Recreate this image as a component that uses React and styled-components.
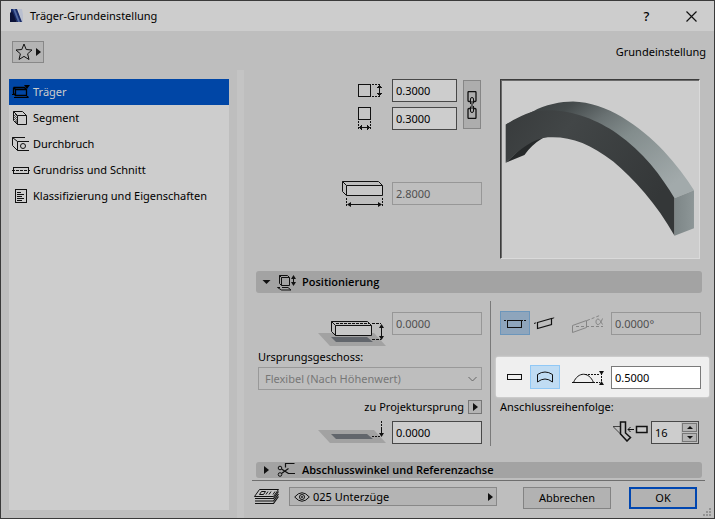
import React from 'react'
import styled, { createGlobalStyle, css } from 'styled-components'

const pages = [
  { id: 'beam', label: 'Träger', icon: BeamIcon },
  { id: 'segment', label: 'Segment', icon: SegmentIcon },
  { id: 'hole', label: 'Durchbruch', icon: HoleIcon },
  { id: 'plan', label: 'Grundriss und Schnitt', icon: PlanIcon },
  { id: 'class', label: 'Klassifizierung und Eigenschaften', icon: ListIcon },
]

export default function App() {
  const [page, setPage] = React.useState('beam')
  const [slanted, setSlanted] = React.useState(false)
  const [curved, setCurved] = React.useState(true)
  const [order, setOrder] = React.useState(16)

  return (
    <Dialog>
      <GlobalStyle />
      <TitleBar>
        <Logo />
        <Title>Träger-Grundeinstellung</Title>
        <TitleButton aria-label="Hilfe">?</TitleButton>
        <TitleButton aria-label="Schließen">
          <Icon w={11} h={11}>
            <path d="M.5.5l10 10M10.5.5l-10 10" strokeWidth="1.2" />
          </Icon>
        </TitleButton>
      </TitleBar>

      <Toolbar>
        <FavoriteButton aria-label="Favoriten">
          <Icon w={18} h={18}>
            <path d="M9 1L11.2 6.5 17 7 12.6 10.8 14 16.5 9 13.4 4 16.5 5.4 10.8 1 7 6.8 6.5z" />
          </Icon>
          <ArrowRight />
        </FavoriteButton>
        <span>Grundeinstellung</span>
      </Toolbar>

      <Columns>
        <Sidebar>
          {pages.map(({ id, label, icon: PageIcon }) => (
            <PageButton key={id} $active={id === page} onClick={() => setPage(id)}>
              <PageIcon />
              {label}
            </PageButton>
          ))}
        </Sidebar>
        <Splitter />

        <Main>
          <Scroller>
            <SizePanel>
              <SizeForm>
                <Pair>
                  <Stack>
                    <Field>
                      <HeightIcon />
                      <TextBox $w={65} aria-label="Höhe" defaultValue="0.3000" />
                    </Field>
                    <Field>
                      <WidthIcon />
                      <TextBox $w={65} aria-label="Breite" defaultValue="0.3000" />
                    </Field>
                  </Stack>
                  <LinkButton aria-label="Maße verknüpfen">
                    <ChainIcon />
                  </LinkButton>
                </Pair>
                <Field>
                  <LengthIcon />
                  <TextBox aria-label="Länge" defaultValue="2.8000" disabled />
                </Field>
              </SizeForm>
              <Preview>
                <BeamPreview />
              </Preview>
            </SizePanel>

            <SectionHeader>
              <ArrowDown />
              <PositionIcon />
              Positionierung
            </SectionHeader>

            <PositionPanel>
              <LeftColumn>
                <ElevationRow>
                  <ElevationIcon />
                  <TextBox aria-label="Höhenlage" defaultValue="0.0000" disabled />
                </ElevationRow>
                <Label htmlFor="story">Ursprungsgeschoss:</Label>
                <SelectWrapper>
                  <Select id="story" disabled>
                    <option>Flexibel (Nach Höhenwert)</option>
                  </Select>
                  <Icon w={11} h={7}>
                    <path d="M1.5 1l4 4 4-4" />
                  </Icon>
                </SelectWrapper>
                <OriginLabel>
                  <label htmlFor="origin">zu Projektursprung</label>
                  <SmallButton aria-label="Bezug wählen">
                    <ArrowRight />
                  </SmallButton>
                </OriginLabel>
                <PlaneField>
                  <OriginIcon />
                  <TextBox id="origin" defaultValue="0.0000" />
                </PlaneField>
              </LeftColumn>

              <RightColumn>
                <OptionRow>
                  <Toggle aria-label="Horizontal" $active={!slanted} onClick={() => setSlanted(false)}>
                    <Icon w={22} h={12} crisp>
                      <path d="M0 3.5h2M3 3.5h2M17 3.5h2M20 3.5h2M3.5 3.5h14v7h-14z" />
                    </Icon>
                  </Toggle>
                  <Toggle aria-label="Geneigt" $active={slanted} onClick={() => setSlanted(true)}>
                    <Icon w={22} h={14}>
                      <path d="M3.5 6.5l14-4v6l-14 4z" strokeWidth="1.2" />
                      <path d="M0 7.5l3-1M18 2.5l3-1" strokeDasharray="2 1" />
                    </Icon>
                  </Toggle>
                  <SlopeIcon />
                  <TextBox aria-label="Neigungswinkel" defaultValue="0.0000°" disabled />
                </OptionRow>
                <OptionRow $lit>
                  <Toggle $lit aria-label="Gerade" $active={!curved} onClick={() => setCurved(false)}>
                    <Icon w={16} h={8} crisp>
                      <path d="M.5 1.5h14v5H.5z" />
                    </Icon>
                  </Toggle>
                  <Toggle $lit aria-label="Gebogen" $active={curved} onClick={() => setCurved(true)}>
                    <Icon w={16} h={12}>
                      <path d="M.5 3.5Q8-1.5 15.5 3.5V11Q8 5 .5 11z" />
                    </Icon>
                  </Toggle>
                  <ArcIcon />
                  <TextBox $lit aria-label="Bogenhöhe" defaultValue="0.5000" />
                </OptionRow>
                <Label htmlFor="order">Anschlussreihenfolge:</Label>
                <OrderRow>
                  <JunctionIcon />
                  <Spinner>
                    <input
                      id="order"
                      type="number"
                      value={order}
                      onChange={e => setOrder(Number(e.target.value))}
                    />
                    <SpinButtons>
                      <button aria-label="Höher" onClick={() => setOrder(order + 1)}>
                        <ArrowUp />
                      </button>
                      <button aria-label="Niedriger" onClick={() => setOrder(order - 1)}>
                        <ArrowDown small />
                      </button>
                    </SpinButtons>
                  </Spinner>
                </OrderRow>
              </RightColumn>
            </PositionPanel>

            <SectionHeader $compact>
              <ArrowRight />
              <ScissorsIcon />
              Abschlusswinkel und Referenzachse
            </SectionHeader>
          </Scroller>

          <Footer>
            <LayersIcon />
            <LayerButton>
              <Icon w={16} h={10}>
                <path d="M.7 5Q8-3.5 15.3 5 8 13.5.7 5z" />
                <circle cx="8" cy="5" r="2.5" />
                <circle cx="8" cy="5" r=".6" />
              </Icon>
              <span>025 Unterzüge</span>
              <ArrowRight />
            </LayerButton>
            <Actions>
              <ActionButton $w={88}>Abbrechen</ActionButton>
              <ActionButton $w={68} $primary>
                OK
              </ActionButton>
            </Actions>
            <Grip>
              <Icon w={8} h={8} crisp>
                <path
                  d="M6 0h2v2H6zM6 3h2v2H6zM6 6h2v2H6zM3 3h2v2H3zM3 6h2v2H3zM0 6h2v2H0z"
                  fill="#939393"
                  stroke="none"
                />
              </Icon>
            </Grip>
          </Footer>
        </Main>
      </Columns>
    </Dialog>
  )
}

/* Icons */

function Icon({ w, h, crisp, color = '#111', children }) {
  return (
    <Svg
      width={w}
      height={h}
      viewBox={`0 0 ${w} ${h}`}
      fill="none"
      stroke={color}
      shapeRendering={crisp ? 'crispEdges' : undefined}
      aria-hidden="true"
    >
      {children}
    </Svg>
  )
}

function ArrowRight() {
  return (
    <Icon w={5} h={8}>
      <path d="M0 0l5 4-5 4z" fill="#111" stroke="none" />
    </Icon>
  )
}

function ArrowDown({ small }) {
  return (
    <Icon w={small ? 6 : 8} h={small ? 3 : 4}>
      <path d={small ? 'M0 0h6L3 3z' : 'M0 0h8L4 4z'} fill="#111" stroke="none" />
    </Icon>
  )
}

function ArrowUp() {
  return (
    <Icon w={6} h={3}>
      <path d="M0 3h6L3 0z" fill="#111" stroke="none" />
    </Icon>
  )
}

function Logo() {
  return (
    <Icon w={14} h={14}>
      <g stroke="none">
        <path d="M8 0h4l1 6v7h-1z" fill="#b9bfcf" />
        <path d="M1 0h6l5 13H7L1 3z" fill="#182b68" />
        <path d="M3 0h2l5 13H8z" fill="#51689f" />
        <path d="M0 13V4l2-2 5 11z" fill="#0c1338" />
      </g>
    </Icon>
  )
}

function BeamIcon() {
  return (
    <Icon w={18} h={14} color="#000">
      <path d="M3.5 4.5h11v6h-11zM1.5 2.5l2 2M1.5 2.5h11l2 2M1.5 2.5v6l2 2" strokeWidth="1.3" />
      <path d="M0 9.5h3M2 12.5h14M14 10.5l3 2" />
      <path d="M12 0h6l-3 4z" fill="#000" stroke="none" />
    </Icon>
  )
}

function SegmentIcon() {
  return (
    <Icon w={18} h={14}>
      <path d="M5.5 4.5h9v9h-9zM1.5.5h9l4 4M1.5.5l4 4M1.5.5v9l4 4" />
      <path d="M2 5l2-2M2 7l3-3M2 9l3-3M3 11l2-3M4 12l1-2" strokeWidth=".7" />
    </Icon>
  )
}

function HoleIcon() {
  return (
    <Icon w={18} h={14}>
      <path d="M17 4.5H5.5v9H17M13 .5H.5l5 4M.5.5v8l5 5" />
      <circle cx="11" cy="9" r="2.5" />
    </Icon>
  )
}

function PlanIcon() {
  return (
    <Icon w={18} h={14} crisp>
      <path d="M1.5 4.5h15v6h-15z" />
      <path d="M0 7.5h18" strokeDasharray="3 1" />
    </Icon>
  )
}

function ListIcon() {
  return (
    <Icon w={18} h={14} crisp>
      <path d="M3.5.5h11v13h-11zM5 3.5h4M5 5.5h7M5 7.5h5M5 9.5h7M5 11.5h5" />
    </Icon>
  )
}

function HeightIcon() {
  return (
    <Icon w={25} h={15} crisp>
      <path d="M.5 1.5h12v12H.5z" fill="#c6c6c6" />
      <path d="M14 1.5h8M14 13.5h8" strokeDasharray="2 1" />
      <path d="M21.5 3v10" />
      <path d="M19 5l2.5-4L24 5zM19 10l2.5 4 2.5-4z" fill="#111" stroke="none" />
    </Icon>
  )
}

function WidthIcon() {
  return (
    <Icon w={25} h={23} crisp>
      <path d="M.5.5h12v12H.5z" fill="#c6c6c6" />
      <path d="M.5 14v8M12.5 14v8" strokeDasharray="2 1" />
      <path d="M2 20.5h9" />
      <path d="M4 18L1 20.5 4 23zM9 18l3 2.5L9 23z" fill="#111" stroke="none" />
    </Icon>
  )
}

function LengthIcon() {
  return (
    <Icon w={41} h={28}>
      <path d="M4.5 5.5h36v10h-36z" fill="#c8c8c8" />
      <path d="M.5 1.5h36l4 4M.5 1.5l4 4M.5 1.5v10l4 4" />
      <path d="M4.5 18v8M40.5 18v8" strokeDasharray="2 1" />
      <path d="M6 24.5h33" />
      <path d="M9 22l-4 2.5L9 27zM36 22l4 2.5-4 2.5z" fill="#111" stroke="none" />
    </Icon>
  )
}

function ChainIcon() {
  return (
    <Icon w={10} h={28}>
      <path
        d="M3.5 10.5H2Q1 10.5 1 9.5v-8Q1 .5 2 .5h6Q9 .5 9 1.5v8Q9 10.5 8 10.5H6.5M3.5 17.5H2Q1 17.5 1 18.5v8Q1 27.5 2 27.5h6Q9 27.5 9 26.5v-8Q9 17.5 8 17.5H6.5"
        strokeWidth="1.3"
      />
      <path d="M3.5 13V8Q3.5 6.5 5 6.5T6.5 8v4.5M3.5 15.5V20Q3.5 21.5 5 21.5T6.5 20v-5M5 10v8" />
    </Icon>
  )
}

function PositionIcon() {
  return (
    <Icon w={19} h={17}>
      <path d="M4.5 3.5h8v8h-8zM2.5 1.5h8l2 2M2.5 1.5l2 2M2.5 1.5v8l2 2" />
      <path d="M3 13.5H.5l4 2.5H14l-3-2.5H5" />
      <path d="M16.5 2v9" />
      <path d="M14 5l2.5-4L19 5zM14 8l2.5 4L19 8z" fill="#111" stroke="none" />
    </Icon>
  )
}

function ElevationIcon() {
  return (
    <Icon w={68} h={26}>
      <path d="M0 13h56l12 13H12z" fill="#a2a2a2" stroke="none" />
      <path d="M13 17h36l6 5H18z" fill="#62666c" stroke="none" />
      <path d="M17.5 5.5h36v10h-36z" fill="#c8c8c8" />
      <path d="M13.5 1.5h36l4 4M13.5 1.5l4 4M13.5 1.5v10l4 4" />
      <path d="M18 3.5h34M54 3.5h9M54 19.5h9" strokeDasharray="3 1" />
      <path d="M63.5 6v12" />
      <path d="M61 8l2.5-4L66 8zM61 16l2.5 4 2.5-4z" fill="#111" stroke="none" />
    </Icon>
  )
}

function OriginIcon() {
  return (
    <Icon w={68} h={23}>
      <path d="M0 9h56l12 13H12z" fill="#a2a2a2" stroke="none" />
      <path d="M13 13h36l6 5H18z" fill="#62666c" stroke="none" />
      <path d="M54 15.5h8M63.5 0v6" strokeDasharray="2 1" />
      <path d="M63.5 6v8" />
      <path d="M61 12h5l-2.5 4z" fill="#111" stroke="none" />
    </Icon>
  )
}

function SlopeIcon() {
  return (
    <Icon w={32} h={19} color="#858585">
      <path d="M.5 11.5l14-5v7l-14 5z" />
      <path d="M15 6.5l14-5.5M4 12.5h27" strokeDasharray="3 2" />
      <path d="M30.5 4.5c-1.5 4-3 6-4.5 6s-2-1.2-2-2.7S24.7 5 26 5s2.5 2 4.5 5.5" />
    </Icon>
  )
}

function ArcIcon() {
  return (
    <Icon w={32} h={16}>
      <path d="M0 13.5h23M1.5 13.5C6 2.5 17 2.5 21.5 13.5" />
      <path d="M13 5.5h15M24 13.5h4" strokeDasharray="2 1" />
      <path d="M29.5 4v9" strokeDasharray="2 1" />
      <path d="M27 2h5l-2.5 4zM27 16h5l-2.5-4z" fill="#111" stroke="none" />
    </Icon>
  )
}

function JunctionIcon() {
  return (
    <Icon w={35} h={21}>
      <path d="M0 5.5h7M0 5.5l9 9" stroke="#444" />
      <path d="M7.5 1h5v11l5 4.5-3.5 3.5-6.5-7z" strokeWidth="1.5" />
      <path d="M15 8.5h6M17.5 6L15 8.5l2.5 2.5" />
      <path d="M23.5 5.5h10.5v6H23.5z" strokeWidth="1.5" fill="#c8c8c8" />
    </Icon>
  )
}

function ScissorsIcon() {
  return (
    <Icon w={19} h={14}>
      <circle cx="3" cy="5" r="1.8" />
      <circle cx="3" cy="11.5" r="1.8" />
      <path d="M4.5 6l7 4.5M4.5 10.5l7-5M17.5.5h-9v4M11 10.5h7" strokeWidth="1.2" />
    </Icon>
  )
}

function LayersIcon() {
  return (
    <Icon w={26} h={18}>
      <path d="M5.5 2.5h19l-5 7H.5z" fill="#c4c4c4" />
      <path d="M7.5 4.5h4l-2 3h-4zM14 4.5l-2 3M17 4.5l-2 3M21 4.5l-2 3" />
      <path d="M1 11.5h18.5l5-7M1 14h18.5l5-7M1 16.5h18.5l5-7" strokeWidth="1.2" />
    </Icon>
  )
}

function BeamPreview() {
  return (
    <svg viewBox="35 241 591 531" width="100%" height="100%" aria-hidden="true">
      <defs>
        <linearGradient id="top" x1="0" y1="0" x2="1" y2="0.7">
          <stop offset="0" stopColor="#343839" />
          <stop offset=".25" stopColor="#454b4c" />
          <stop offset=".42" stopColor="#697172" />
          <stop offset=".6" stopColor="#838d8d" />
          <stop offset="1" stopColor="#a2aaab" />
        </linearGradient>
        <linearGradient id="front" x1="0" y1="0" x2="1" y2="0.5">
          <stop offset="0" stopColor="#383b3c" />
          <stop offset=".35" stopColor="#424647" />
          <stop offset="1" stopColor="#343738" />
        </linearGradient>
        <linearGradient id="end" x1="0" y1="0" x2="1" y2="0">
          <stop offset="0" stopColor="#7d8687" />
          <stop offset="1" stopColor="#8d9697" />
        </linearGradient>
      </defs>
      <path d="M49 488L105 465Q125 435 160 414L130 410z" fill="#26292a" />
      <path
        d="M49 374L130 335C165 314 215 305 250 305C350 307 450 378 520 452Q575 512 611 570L553 594L300 400z"
        fill="url(#top)"
      />
      <path
        d="M49 374Q90 348 130 335C225 320 315 355 380 400C460 455 515 530 553 594V706C500 610 430 535 370 484C300 430 240 408 175 412C125 418 90 450 49 488z"
        fill="url(#front)"
      />
      <path d="M553 594L611 570V683L553 706z" fill="url(#end)" />
    </svg>
  )
}

/* Styles */

const GlobalStyle = createGlobalStyle`
  * {
    box-sizing: border-box;
  }

  body {
    margin: 0;
  }

  body,
  button,
  input,
  select {
    color: #000;
    font-family: 'Noto Sans', 'Open Sans', sans-serif;
    font-size: 11px;
    line-height: 16px;
  }

  button {
    align-items: center;
    display: flex;
    justify-content: center;
    padding: 0;
  }
`

const Svg = styled.svg`
  display: block;
  flex: none;
`

const Dialog = styled.div`
  background: #bebebe;
  border: 1px solid #3a3a3a;
  display: flex;
  flex-direction: column;
  height: 100vh;
`

const TitleBar = styled.header`
  align-items: center;
  background: #cdcdcd;
  display: flex;
  flex: none;
  height: 30px;
  padding-left: 9px;
`

const Title = styled.h1`
  flex: 1;
  font-size: 11px;
  font-weight: 400;
  margin: 0 0 0 6px;
`

const TitleButton = styled.button`
  background: transparent;
  border: none;
  font-size: 13px;
  font-weight: 500;
  height: 30px;
  width: 45px;
`

const Toolbar = styled.div`
  align-items: center;
  display: flex;
  flex: none;
  height: 48px;
  justify-content: space-between;
  padding: 0 8px 6px 11px;
`

const FavoriteButton = styled.button`
  background: #b4b4b4;
  border: 1px solid #888;
  gap: 3px;
  height: 22px;
  width: 32px;
`

const Columns = styled.div`
  display: flex;
  flex: 1;
  min-height: 0;
`

const Sidebar = styled.nav`
  background: #cdcdcd;
  flex: none;
  margin: 0 8px 8px;
  width: 220px;
`

const PageButton = styled.button`
  background: ${p => (p.$active ? '#0046a6' : 'transparent')};
  border: none;
  color: ${p => (p.$active ? '#cdcdcd' : '#000')};
  gap: 3px;
  height: 26px;
  justify-content: flex-start;
  padding-left: 3px;
  width: 100%;
`

const Splitter = styled.div`
  background: #c4c4c4;
  flex: none;
  margin-top: -9px;
  width: 7px;
`

const Main = styled.main`
  display: flex;
  flex: 1;
  flex-direction: column;
  min-width: 0;
`

const Scroller = styled.div`
  flex: 1;
  min-height: 0;
  overflow: hidden;
  padding: 0 12px;
`

const SizePanel = styled.section`
  display: flex;
  gap: 18px;
  justify-content: space-between;
  padding: 0 2px 12px 0;
`

const SizeForm = styled.div`
  align-items: flex-end;
  display: flex;
  flex: 1;
  flex-direction: column;
  gap: 52px;
`

const Pair = styled.div`
  align-items: center;
  display: flex;
  gap: 6px;
  padding-right: 1px;
`

const Stack = styled.div`
  display: flex;
  flex-direction: column;
  gap: 5px;
`

const Field = styled.div`
  align-items: center;
  display: flex;
  gap: 9px;
  height: 23px;
  justify-content: flex-end;

  ${Svg} {
    overflow: visible;
  }
`

const TextBox = styled.input`
  background: ${p => (p.$lit ? '#fff' : '#cdcdcd')};
  border: 1px solid ${p => (p.$lit ? '#7a7a7a' : '#484848')};
  border-radius: 0;
  flex: none;
  height: 23px;
  outline: none;
  padding: 0 3px;
  width: ${p => p.$w || 90}px;

  &:disabled {
    background: #bebebe;
    border-color: #979797;
    color: #505050;
  }
`

const LinkButton = styled.button`
  background: #adadad;
  border: 1px solid #868686;
  height: 49px;
  width: 18px;
`

const Preview = styled.div`
  background: #cdcdcd;
  border: 1px solid #3c3c3c;
  border-bottom-color: #dadada;
  border-right-color: #dadada;
  box-shadow: inset 1px 1px #6a6a6a;
  height: 180px;
  width: 200px;
`

const SectionHeader = styled.h2`
  align-items: center;
  background: #a3a3a3;
  border-radius: 3px;
  display: flex;
  font-family: 'Open Sans', 'Noto Sans', sans-serif;
  font-size: 11px;
  font-weight: 600;
  gap: 6px;
  height: ${p => (p.$compact ? 16 : 22)}px;
  margin: 0;
  padding-left: 6px;

  ${Svg}:first-child {
    width: 9px;
  }
`

const PositionPanel = styled.section`
  display: flex;
  padding: 8px 0 16px;
`

const LeftColumn = styled.div`
  border-right: 1px solid #7a7a7a;
  display: flex;
  flex: 1;
  flex-direction: column;
  padding: 11px 8px 2px 0;
`

const PlaneField = styled(Field)`
  gap: 6px;
`

const ElevationRow = styled(PlaneField)`
  align-items: flex-start;
  height: 34px;

  ${Svg} {
    align-self: flex-end;
  }
`

const Label = styled.label`
  display: block;
  margin: 3px 0 2px 2px;
`

const SelectWrapper = styled.div`
  margin-left: 2px;
  position: relative;

  ${Svg} {
    opacity: 0.5;
    pointer-events: none;
    position: absolute;
    right: 4px;
    top: 9px;
  }
`

const Select = styled.select`
  appearance: none;
  background: #bebebe;
  border: 1px solid #999;
  border-radius: 0;
  display: block;
  height: 23px;
  padding: 0 20px 0 6px;
  width: 100%;

  &:disabled {
    color: #777;
    opacity: 1;
  }
`

const OriginLabel = styled.div`
  align-items: center;
  display: flex;
  gap: 4px;
  justify-content: flex-end;
  margin: 9px 0 6px;
`

const SmallButton = styled.button`
  background: #b4b4b4;
  border: 1px solid #777;
  height: 14px;
  width: 14px;
`

const RightColumn = styled.div`
  flex: none;
  padding: 10px 1px 0 9px;
  width: 211px;

  ${Label} {
    margin: 2px 0 6px;
  }
`

const OptionRow = styled.div`
  align-items: flex-end;
  display: flex;

  > ${Svg} {
    align-self: center;
    margin: 0 7px 0 auto;
  }

  ${p =>
    p.$lit &&
    css`
      background: #efefef;
      border-radius: 2px;
      box-shadow: 0 0 2px #efefef;
      margin: 22px -8px 0 -4px;
      padding: 8px 8px 8px 4px;
    `}
`

const activeToggle = css`
  background: ${p => (p.$lit ? '#c0dcf3' : '#8ea5bc')};
  border-color: ${p => (p.$lit ? '#90c8f6' : '#6c96bb')};
`

const Toggle = styled.button`
  background: transparent;
  border: 1px solid transparent;
  height: 24px;
  width: 30px;

  ${p => p.$active && activeToggle}
`

const OrderRow = styled.div`
  display: flex;
  gap: 3px;
  justify-content: flex-end;
  padding-right: 2px;
`

const Spinner = styled.div`
  background: #cdcdcd;
  border: 1px solid #484848;
  display: flex;
  height: 23px;
  width: 48px;

  input {
    appearance: textfield;
    background: transparent;
    border: none;
    flex: 1;
    min-width: 0;
    outline: none;
    padding: 0 3px;
  }

  input::-webkit-inner-spin-button {
    appearance: none;
    margin: 0;
  }
`

const SpinButtons = styled.div`
  background: #bebebe;
  display: flex;
  flex-direction: column;
  gap: 1px;
  padding: 1px;

  button {
    background: #b4b4b4;
    border: 1px solid #777;
    flex: 1;
    width: 15px;
  }
`

const Footer = styled.footer`
  border-top: 1px solid #6e6e6e;
  display: flex;
  flex: none;
  height: 38px;
  margin: 0 9px 0 8px;
  padding: 6px 8px 0 2px;
  position: relative;
`

const LayerButton = styled.button`
  background: #b4b4b4;
  border: 1px solid #888;
  flex: 1;
  gap: 3px;
  height: 19px;
  margin: 0 26px 0 9px;
  padding: 0 3px 0 4px;

  span {
    flex: 1;
    text-align: left;
  }
`

const Actions = styled.div`
  display: flex;
  gap: 18px;
`

const ActionButton = styled.button`
  background: #b2b2b2;
  border: ${p => (p.$primary ? '2px solid #0046b0' : '1px solid #838383')};
  height: 22px;
  width: ${p => p.$w}px;
`

/* Resize handle in the corner of the window */
const Grip = styled.div`
  bottom: 2px;
  position: absolute;
  right: -6px;
`
